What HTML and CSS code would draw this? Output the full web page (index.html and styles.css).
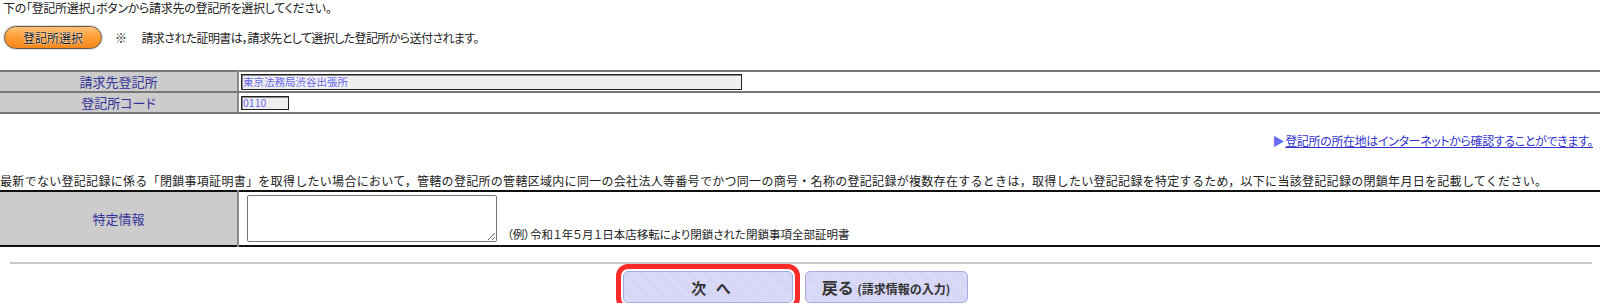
FILE: index.html
```html
<!DOCTYPE html>
<html lang="ja">

<head>
    <meta charset="utf-8">
    <title>請求先登記所の選択</title>
    <link rel="stylesheet" href="styles.css">
</head>

<body>
    <p class="intro">下の「登記所選択」ボタンから請求先の登記所を選択してください。</p>

    <div class="select-row">
        <button class="orange-btn" type="button">登記所選択</button>
        <span class="note"><span class="mark">※</span>請求された証明書は，請求先として選択した登記所から送付されます。</span>
    </div>

    <table class="info office">
        <tr>
            <th>請求先登記所</th>
            <td><input class="field wide" type="text" value="東京法務局渋谷出張所" readonly></td>
        </tr>
        <tr>
            <th>登記所コード</th>
            <td><input class="field short" type="text" value="0110" readonly></td>
        </tr>
    </table>

    <p class="link-line"><span class="arrow">▶</span><a href="#">登記所の所在地はインターネットから確認することができます。</a></p>

    <p class="explain">最新でない登記記録に係る「閉鎖事項証明書」を取得したい場合において，管轄の登記所の管轄区域内に同一の会社法人等番号でかつ同一の商号・名称の登記記録が複数存在するときは，取得したい登記記録を特定するため，以下に当該登記記録の閉鎖年月日を記載してください。</p>

    <table class="info closed">
        <tr>
            <th>特定情報</th>
            <td><textarea class="memo"></textarea><span class="sample">（例）令和１年５月１日本店移転により閉鎖された閉鎖事項全部証明書</span></td>
        </tr>
    </table>

    <hr class="rule">

    <div class="nav">
        <button class="nav-btn next" type="button">次&nbsp;へ</button>
        <button class="nav-btn back" type="button">戻る <small>(請求情報の入力)</small></button>
    </div>
</body>

</html>
```

FILE: styles.css
```css
body {
    margin: 0;
    background: #fff;
    color: #222;
    font-family: "Noto Sans CJK JP", "Noto Sans", sans-serif;
    font-size: 12px;
    font-feature-settings: "palt";
}

p {
    margin: 0;
}

.intro {
    line-height: 16px;
    padding-left: 3px;
    letter-spacing: -0.3px;
}

/* 登記所選択 */
.select-row {
    display: flex;
    align-items: center;
    height: 23px;
    margin-top: 10px;
    padding-left: 4px;
}

.orange-btn {
    width: 98px;
    height: 23px;
    padding: 0;
    border: 1px solid #6b5a48;
    border-radius: 12px;
    background: linear-gradient(#ffc27a 0%, #ff9f38 45%, #f5871a 100%);
    box-shadow: 0 0 0 1px #ddd;
    color: #111;
    font-family: inherit;
    font-size: 12px;
    text-shadow: 0 0 2px #fff, 0 0 1px #fff;
    cursor: pointer;
}

.note {
    margin-left: 13px;
    font-size: 12px;
    letter-spacing: -0.6px;
}

.mark {
    margin-right: 15px;
}

/* 表 */
.info {
    width: 100%;
    border-collapse: collapse;
}

.info th {
    width: 237px;
    padding: 0;
    background: #ccc;
    border-right: 2px solid #8a8a8a;
    color: #33339a;
    font-size: 13px;
    font-weight: normal;
    text-align: center;
}

.info td {
    padding: 0 0 0 2px;
}

.office {
    margin-top: 21px;
    border-top: 2px solid #777;
}

.office th,
.office td {
    height: 19px;
    border-bottom: 2px solid #777;
}

.field {
    box-sizing: border-box;
    display: block;
    margin: 0;
    padding: 0 1px;
    border: 1px solid #222;
    box-shadow: inset 1px 1px 0 #888;
    background: #efefef;
    color: #6a6af0;
    font-family: inherit;
    font-size: 10.5px;
    line-height: 12px;
}

.wide {
    width: 501px;
    height: 16px;
}

.short {
    width: 48px;
    height: 14px;
}

.link-line {
    margin-top: 19px;
    padding-right: 7px;
    line-height: 16px;
    text-align: right;
    letter-spacing: -0.35px;
}

.arrow {
    margin-right: 1px;
    color: #6a6af0;
    font-size: 12px;
}

.link-line a {
    color: #3333cc;
}

.explain {
    margin-top: 24px;
    line-height: 16px;
    letter-spacing: 0.3px;
    font-feature-settings: normal;
}

.closed {
    margin-top: 1px;
    border-top: 2px solid #111;
    border-bottom: 2px solid #111;
}

.closed th,
.closed td {
    height: 50px;
}

.closed td {
    padding: 0 0 3px 8px;
    vertical-align: bottom;
}

.memo {
    box-sizing: border-box;
    width: 250px;
    height: 47px;
    margin: 0;
    border: 1px solid #767676;
    border-radius: 2px;
    vertical-align: bottom;
}

.sample {
    margin-left: 10px;
    font-size: 11.5px;
}

.rule {
    height: 0;
    margin: 15px 8px 0 10px;
    border: none;
    border-top: 2px solid #c9c9c9;
}

/* 次へ・戻る */
.nav {
    display: flex;
    justify-content: center;
    gap: 12px;
    margin-top: 7px;
}

.nav-btn {
    height: 32px;
    padding: 0;
    border: 1px solid #a9a9dc;
    border-radius: 5px;
    background: repeating-linear-gradient(45deg, #dcdcf9 0 1px, #d3d3f3 1px 2px);
    color: #333;
    font-family: inherit;
    font-size: 15px;
    font-weight: bold;
    text-align: center;
    cursor: pointer;
}

.next {
    width: 170px;
    margin-left: -10px;
    padding-left: 10px;
    letter-spacing: 3px;
    outline: 5px solid #ff2b2b;
    outline-offset: 2px;
}

.back {
    width: 163px;
    font-size: 16px;
    font-feature-settings: normal;
}

.back small {
    font-size: 12px;
}
```
